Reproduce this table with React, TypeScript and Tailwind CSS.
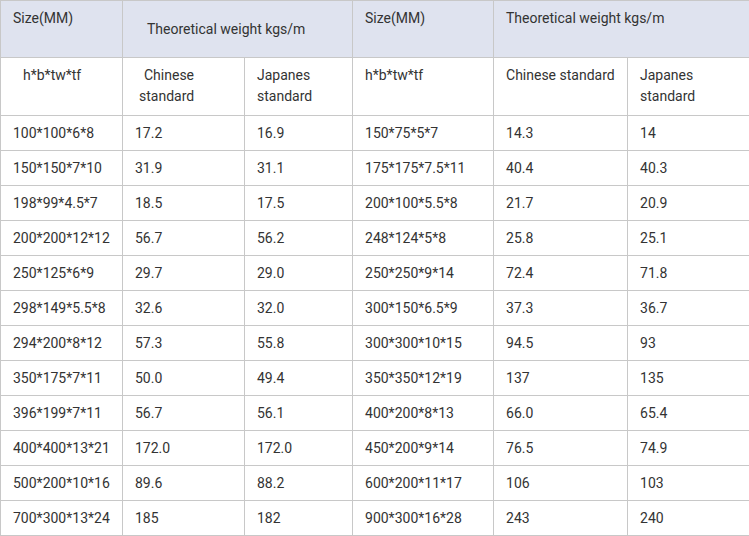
const rows: string[][] = [
  ['100*100*6*8', '17.2', '16.9', '150*75*5*7', '14.3', '14'],
  ['150*150*7*10', '31.9', '31.1', '175*175*7.5*11', '40.4', '40.3'],
  ['198*99*4.5*7', '18.5', '17.5', '200*100*5.5*8', '21.7', '20.9'],
  ['200*200*12*12', '56.7', '56.2', '248*124*5*8', '25.8', '25.1'],
  ['250*125*6*9', '29.7', '29.0', '250*250*9*14', '72.4', '71.8'],
  ['298*149*5.5*8', '32.6', '32.0', '300*150*6.5*9', '37.3', '36.7'],
  ['294*200*8*12', '57.3', '55.8', '300*300*10*15', '94.5', '93'],
  ['350*175*7*11', '50.0', '49.4', '350*350*12*19', '137', '135'],
  ['396*199*7*11', '56.7', '56.1', '400*200*8*13', '66.0', '65.4'],
  ['400*400*13*21', '172.0', '172.0', '450*200*9*14', '76.5', '74.9'],
  ['500*200*10*16', '89.6', '88.2', '600*200*11*17', '106', '103'],
  ['700*300*13*24', '185', '182', '900*300*16*28', '243', '240'],
];

const cell = 'border border-[#c8c8c8] px-3 text-left font-normal';

export default function App() {
  return (
    <div className="w-[749px] h-[536px] overflow-hidden bg-white">
      <table
        className="w-[752px] table-fixed border-collapse text-[14px] leading-[21px] text-[#333]"
        style={{ fontFamily: 'Roboto, "Noto Sans", sans-serif' }}
      >
        <colgroup>
          <col className="w-[122px]" />
          <col className="w-[122px]" />
          <col className="w-[108px]" />
          <col className="w-[141px]" />
          <col className="w-[134px]" />
          <col className="w-[125px]" />
        </colgroup>
        <thead>
          <tr className="h-[57px] bg-[#dfe3ef]">
            <th className={`${cell} align-top pt-[7px]`}>Size(MM)</th>
            <th colSpan={2} className={`${cell} align-middle pl-[24px]`}>
              Theoretical weight kgs/m
            </th>
            <th className={`${cell} align-top pt-[7px]`}>Size(MM)</th>
            <th colSpan={2} className={`${cell} align-top pt-[7px]`}>
              Theoretical weight kgs/m
            </th>
          </tr>
          <tr className="h-[58px]">
            <th className={`${cell} align-top pt-[7px] pl-[22px]`}>h*b*tw*tf</th>
            <th className={`${cell} align-top pt-[7px]`}>
              <span className="block pl-[9px]">Chinese</span>
              <span className="block pl-[4px]">standard</span>
            </th>
            <th className={`${cell} align-top pt-[7px]`}>Japanes standard</th>
            <th className={`${cell} align-top pt-[7px]`}>h*b*tw*tf</th>
            <th className={`${cell} align-top pt-[7px]`}>Chinese standard</th>
            <th className={`${cell} align-top pt-[7px]`}>
              <span className="block">Japanes</span>
              <span className="block">standard</span>
            </th>
          </tr>
        </thead>
        <tbody>
          {rows.map((r, i) => (
            <tr key={i} className="h-[35px]">
              {r.map((v, j) => (
                <td key={j} className={`${cell} align-middle`}>
                  {v}
                </td>
              ))}
            </tr>
          ))}
        </tbody>
      </table>
    </div>
  );
}
